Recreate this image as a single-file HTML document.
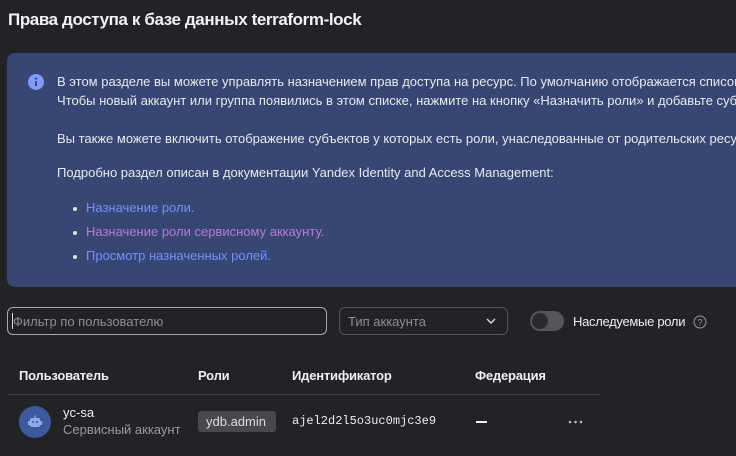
<!DOCTYPE html>
<html><head><meta charset="utf-8"><style>
*{margin:0;padding:0;box-sizing:border-box}
body{width:736px;height:456px;overflow:hidden;background:#222327;font-family:"Liberation Sans",sans-serif;color:#e6e6e8;position:relative}
.a{position:absolute;white-space:nowrap}
h1{position:absolute;left:8px;top:10px;font-size:17px;font-weight:bold;letter-spacing:-0.4px;color:#f2f2f2}
.panel{position:absolute;left:7px;top:53px;width:740px;height:234px;background:#384673;border-radius:8px;overflow:hidden}
.t{font-size:13px;letter-spacing:0px;color:#e8e9ee}
.l1{color:#7192ff}.l2{color:#b87ad8}
.dot{position:absolute;width:4px;height:4px;border-radius:50%;background:#e0e0e0}
.inp{position:absolute;border:1px solid #55565c;border-radius:6px;height:28px;top:307px}
.h{font-weight:bold;font-size:13px;color:#f0f0f0;letter-spacing:-0.2px}
</style></head><body>
<h1>Права доступа к базе данных terraform-lock</h1>
<div class="panel">
<svg class="a" style="left:21px;top:21px" width="16" height="16" viewBox="0 0 16 16"><circle cx="8" cy="8" r="8" fill="#7e9bff"/><rect x="7" y="7" width="2" height="5" fill="#384673"/><circle cx="8" cy="4.6" r="1.1" fill="#384673"/></svg>
<div class="a t" style="left:50px;top:21px">В этом разделе вы можете управлять назначением прав доступа на ресурс. По умолчанию отображается список</div>
<div class="a t" style="left:50px;top:40px">Чтобы новый аккаунт или группа появились в этом списке, нажмите на кнопку «Назначить роли» и добавьте субъект</div>
<div class="a t" style="left:50px;top:78px">Вы также можете включить отображение субъектов у которых есть роли, унаследованные от родительских ресурсов</div>
<div class="a t" style="left:50px;top:112px">Подробно раздел описан в документации Yandex Identity and Access Management:</div>
<div class="dot" style="left:66px;top:154px"></div><div class="a t l1" style="left:79px;top:147px">Назначение роли.</div>
<div class="dot" style="left:66px;top:178px"></div><div class="a t l2" style="left:79px;top:171px">Назначение роли сервисному аккаунту.</div>
<div class="dot" style="left:66px;top:202px"></div><div class="a t l1" style="left:79px;top:195px">Просмотр назначенных ролей.</div>
</div>
<div class="inp" style="left:7px;width:320px;border-color:#aaa"></div>
<div class="a" style="left:12px;top:313px;width:1px;height:16px;background:#ddd"></div>
<div class="a t" style="left:13px;top:314px;color:#8d8e93">Фильтр по пользователю</div>
<div class="inp" style="left:339px;width:169px"></div>
<div class="a t" style="left:348px;top:314px;color:#8d8e93">Тип аккаунта</div>
<svg class="a" style="left:485px;top:316px" width="12" height="10" viewBox="0 0 12 10"><path d="M2 3l4 4 4-4" stroke="#ddd" stroke-width="1.4" fill="none"/></svg>
<div class="a" style="left:530px;top:311px;width:34px;height:20px;border-radius:10px;background:#55565b"></div>
<div class="a" style="left:532px;top:313px;width:16px;height:16px;border-radius:50%;background:#2a2b2f"></div>
<div class="a t" style="left:573px;top:314px;color:#eee;letter-spacing:-0.3px">Наследуемые роли</div>
<svg class="a" style="left:693px;top:315px" width="14" height="14" viewBox="0 0 14 14"><circle cx="7" cy="7" r="6" stroke="#999" fill="none"/><text x="7" y="10.5" font-size="9" fill="#999" text-anchor="middle" font-family="Liberation Sans">?</text></svg>
<div class="a h" style="left:19px;top:368px">Пользователь</div>
<div class="a h" style="left:198px;top:368px">Роли</div>
<div class="a h" style="left:292px;top:368px">Идентификатор</div>
<div class="a h" style="left:475px;top:368px">Федерация</div>
<div class="a" style="left:7px;top:394px;width:594px;height:1px;background:#3d3e43"></div>
<div class="a" style="left:19px;top:406px;width:32px;height:32px;border-radius:50%;background:#3d5a9e"></div>
<svg class="a" style="left:27px;top:414px" width="16" height="16" viewBox="0 0 16 16"><rect x="3" y="4" width="10" height="9" rx="2" fill="#8fa8e8"/><rect x="1" y="7" width="2" height="4" fill="#8fa8e8"/><rect x="13" y="7" width="2" height="4" fill="#8fa8e8"/><rect x="7.3" y="1.5" width="1.4" height="3" fill="#8fa8e8"/><circle cx="6" cy="8" r="1" fill="#3d5a9e"/><circle cx="10" cy="8" r="1" fill="#3d5a9e"/></svg>
<div class="a t" style="left:63px;top:405px;color:#eee">yc-sa</div>
<div class="a t" style="left:63px;top:422px;color:#9a9ba0">Сервисный аккаунт</div>
<div class="a t" style="left:198px;top:411px;width:78px;height:21px;background:#49494d;border-radius:3px;padding:3px 0 0 8px;color:#ddd">ydb.admin</div>
<div class="a" style="left:292px;top:414px;font-family:'Liberation Mono',monospace;font-size:12px;color:#eee">ajel2d2l5o3uc0mjc3e9</div>
<div class="a" style="left:476px;top:421px;width:11px;height:2px;background:#eee"></div>
<svg class="a" style="left:568px;top:419px" width="16" height="6"><circle cx="2" cy="3" r="1.3" fill="#bbb"/><circle cx="7.5" cy="3" r="1.3" fill="#bbb"/><circle cx="13" cy="3" r="1.3" fill="#bbb"/></svg>
</body></html>
